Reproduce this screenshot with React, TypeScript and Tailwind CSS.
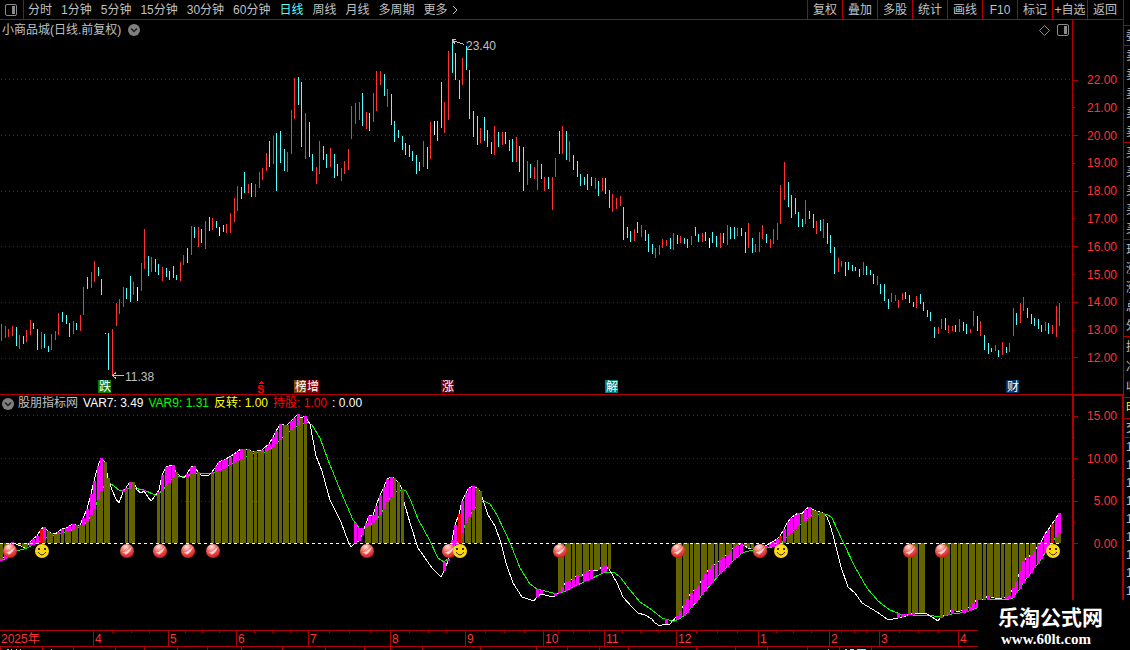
import { Fragment } from 'react'

type Point = [number, number]

const PERIODS = ['分时', '1分钟', '5分钟', '15分钟', '30分钟', '60分钟', '日线', '周线', '月线', '多周期']
const TOOLS = ['复权', '叠加', '多股', '统计', '画线', 'F10', '标记', '+自选', '返回']

// One entry per trading day: direction (r up, c down, w flat), then high and low on the chart grid
const CANDLES = `
r324-341 r326-338 r329-337 r326-336 c327-346 r335-349 c336-344 r330-342 r320-335 c323-329
c329-350 r332-349 c334-348 c346-352 r334-350 r331-340 r313-335 c312-322 c315-324 c323-337
r321-334 c323-330 r315-331 r287-315 c277-289 r272-288 r261-282 c267-276 c279-295 w333-334
c333-370 r329-375 r303-326 r299-314 r287-307 c288-299 c276-302 r282-295 w287-301 r263-291
r229-269 c256-276 r257-272 c259-272 c264-275 r267-281 c268-277 c271-280 c266-278 c275-280
r262-281 r255-265 c248-263 r226-255 c227-238 r227-247 c229-243 r221-249 c217-231 r218-230
c221-228 w227-236 c225-232 r224-233 r213-233 r198-222 r186-211 c187-199 c172-193 r184-193
c183-197 r184-197 r172-188 r168-180 r153-171 c141-167 r136-164 c133-191 c131-163 c149-171
r152-172 r110-154 r78-119 c77-105 c82-147 r113-159 c122-157 c154-171 r167-184 r141-174
c146-160 c154-168 r148-167 c154-178 c164-176 r168-181 r161-174 r149-170 r106-139 r103-124
r102-120 c93-126 r112-129 c113-131 r93-122 r71-111 r71-85 c74-96 r89-107 c94-125
c121-142 c130-138 c136-150 c143-155 c145-157 c151-161 c155-174 c162-171 r141-167 c147-169
r122-159 w121-135 c121-141 c82-128 r102-133 r51-120 c43-73 c53-80 c80-99 r58-85
c46-70 c70-119 c111-137 c116-145 r128-143 c117-141 c130-147 c142-154 r126-155 c132-147
r132-145 c132-144 c140-151 c139-162 r137-162 c146-172 c147-191 r161-185 c164-178 r167-179
r160-190 c164-179 r177-191 c177-189 r177-210 r158-177 c131-154 r126-154 c131-160 r141-162
c155-170 c161-177 c174-186 c177-185 c174-190 c177-186 r178-189 c181-196 r178-191 c178-194
c190-208 r194-212 r198-209 r196-206 c207-240 c227-238 c231-242 r229-241 c222-233 r225-237
c230-241 c234-252 c244-254 r248-258 r245-255 r239-248 r240-246 c238-249 r233-250 c235-244
r236-243 c238-244 c239-248 r236-245 c227-236 c234-242 r233-242 c232-241 w238-248 c232-243
c236-247 r233-248 c233-243 r225-245 c227-239 c227-239 r228-236 c228-236 c232-253 r223-248
c238-253 r244-252 r232-252 r225-239 c234-243 r239-248 r229-244 r223-240 r185-224 r162-200
c182-207 c195-218 c198-214 c212-227 c219-227 r200-224 c211-219 c214-228 r221-234 c220-231
r219-238 c223-244 c235-253 c247-274 r258-272 r261-267 c262-276 c262-270 c265-271 c267-271
c269-277 r262-275 c266-275 c270-275 c274-284 r276-285 c284-294 c284-301 c299-309 r293-302
r295-301 r300-308 r293-300 c292-299 c295-303 c302-307 r296-308 c294-304 c302-311 c310-317
c312-321 c327-338 r327-334 r319-329 c318-330 r325-333 r326-331 c325-332 r319-332 c322-331
c324-334 r329-333 r311-326 c316-331 r321-336 c335-350 c343-354 c348-352 r345-351 c350-357
r342-355 c347-353 r343-352 r308-336 c313-325 r303-323 r297-311 c308-318 c314-324 c318-326
c319-329 c325-332 r322-331 c323-334 r325-334 r306-337 r303-326`
  .trim()
  .split(/\s+/)
  .map((s) => {
    const [top, bottom] = s.slice(1).split('-').map(Number)
    return { kind: s[0], top, bottom }
  })

const CANDLE_COLORS: Record<string, string> = { r: '#ff3232', c: '#54ffff', w: '#ffffff' }

const dayX = (k: number) => Math.floor(1.72 + 3.574 * k)

const ZERO = 543

const FAST: Point[] = [
  [0, 560], [5, 556], [9, 546], [12, 542], [18, 545], [26, 548], [30, 542], [34, 538], [37, 536], [41, 529], [44, 527],
  [48, 531], [51, 533], [55, 534], [58, 532], [62, 529], [66, 528], [73, 524], [76, 525], [80, 525], [83, 518], [87, 509],
  [91, 494], [94, 481], [98, 466], [101, 458], [105, 462], [108, 478], [112, 490], [116, 499], [119, 503], [123, 492],
  [130, 482], [134, 482], [137, 490], [141, 493], [144, 491], [148, 497], [151, 501], [155, 496], [159, 490], [162, 475],
  [166, 467], [173, 465], [176, 472], [180, 476], [184, 478], [187, 474], [191, 467], [194, 466], [198, 472], [201, 475],
  [209, 475], [212, 472], [219, 462], [226, 459], [234, 454], [241, 449], [248, 449], [252, 452], [262, 450], [269, 444],
  [273, 437], [280, 424], [284, 425], [287, 425], [294, 418], [298, 414], [301, 418], [305, 416], [310, 424], [316, 456],
  [322, 471], [330, 500], [341, 522], [348, 541], [351, 547], [355, 543], [359, 541], [362, 535], [366, 523], [369, 516],
  [373, 515], [376, 506], [380, 495], [384, 487], [387, 479], [391, 477], [394, 478], [398, 482], [402, 489], [404, 502],
  [410, 523], [418, 548], [423, 555], [432, 568], [441, 577], [444, 571], [448, 561], [452, 540], [455, 525], [459, 514],
  [462, 501], [466, 493], [469, 488], [473, 486], [477, 488], [480, 491], [484, 503], [488, 515], [495, 526], [501, 543],
  [506, 563], [513, 583], [522, 597], [528, 599], [534, 601], [537, 597], [541, 594], [553, 597], [555, 596], [559, 592],
  [562, 587], [566, 582], [570, 580], [573, 579], [577, 575], [580, 577], [584, 574], [587, 571], [590, 570], [594, 570],
  [598, 570], [602, 567], [605, 566], [609, 569], [617, 583], [623, 597], [633, 608], [638, 613], [645, 615], [652, 619],
  [655, 623], [660, 626], [662, 625], [666, 624], [670, 624], [677, 616], [680, 611], [684, 605], [687, 599], [691, 593],
  [695, 589], [698, 586], [702, 580], [705, 574], [709, 569], [712, 565], [716, 564], [719, 561], [723, 557], [727, 555],
  [730, 551], [734, 547], [737, 545], [741, 544], [745, 546], [748, 548], [752, 549], [763, 548], [767, 545], [770, 543],
  [774, 541], [777, 539], [780, 536], [784, 529], [787, 523], [791, 518], [795, 515], [798, 513], [802, 514], [805, 510],
  [809, 507], [812, 509], [816, 511], [820, 512], [823, 513], [827, 517], [830, 525], [833, 535], [836, 547], [841, 567],
  [848, 587], [855, 593], [862, 603], [877, 612], [887, 619], [893, 619], [898, 618], [902, 617], [906, 616], [909, 614],
  [916, 613], [925, 613], [932, 617], [938, 621], [941, 617], [945, 615], [948, 613], [952, 610], [956, 611], [960, 611],
  [963, 610], [966, 609], [970, 607], [973, 603], [977, 600], [984, 599], [988, 596], [995, 598], [1002, 598], [1009, 596],
  [1013, 588], [1016, 582], [1020, 571], [1023, 561], [1027, 558], [1031, 555], [1034, 551], [1038, 546], [1041, 542],
  [1045, 534], [1048, 530], [1052, 524], [1055, 520], [1059, 513],
]

const SLOW: Point[] = [
  [0, 561], [5, 559], [8, 557], [17, 551], [27, 548], [34, 544], [41, 541], [48, 537], [55, 535], [66, 532], [80, 527],
  [87, 522], [91, 515], [94, 509], [98, 500], [101, 491], [105, 485], [110, 483], [114, 486], [120, 491], [127, 489],
  [133, 488], [144, 490], [155, 495], [158, 494], [162, 491], [166, 486], [173, 478], [178, 476], [187, 477], [191, 474],
  [200, 473], [212, 474], [219, 471], [230, 465], [243, 458], [255, 453], [266, 452], [273, 447], [281, 439], [291, 430],
  [300, 425], [307, 422], [312, 425], [320, 438], [328, 460], [341, 492], [353, 520], [359, 528], [366, 528], [369, 526],
  [373, 523], [376, 520], [380, 515], [384, 509], [387, 502], [391, 497], [398, 490], [406, 491], [411, 501], [418, 519],
  [430, 541], [438, 558], [444, 562], [448, 559], [455, 545], [459, 540], [462, 533], [466, 523], [469, 517], [473, 510],
  [480, 503], [484, 501], [490, 504], [497, 515], [505, 532], [511, 545], [520, 568], [530, 584], [537, 589], [553, 593],
  [559, 593], [566, 591], [573, 587], [584, 582], [605, 572], [615, 573], [620, 577], [630, 590], [640, 602], [652, 610],
  [662, 618], [672, 621], [677, 620], [684, 616], [691, 608], [698, 600], [705, 591], [712, 583], [719, 575], [727, 567],
  [734, 560], [741, 554], [745, 552], [753, 550], [767, 548], [777, 546], [784, 541], [787, 537], [791, 533], [795, 529],
  [798, 526], [805, 521], [812, 515], [818, 514], [827, 514], [832, 518], [843, 542], [855, 567], [867, 588], [878, 601],
  [890, 610], [900, 614], [913, 615], [927, 615], [940, 617], [952, 614], [960, 613], [966, 612], [977, 608], [990, 600],
  [1009, 599], [1013, 598], [1016, 593], [1020, 589], [1023, 583], [1027, 578], [1031, 573], [1034, 568], [1038, 564],
  [1041, 559], [1045, 553], [1048, 548], [1052, 543], [1055, 538], [1059, 533],
]

// Stretches where the position is held and the olive columns are filled in
const HOLD: Point[] = [
  [0, 9], [18, 27], [44, 109], [125, 135], [158, 178], [187, 199], [212, 306], [366, 403], [462, 481], [559, 610],
  [677, 753], [784, 825], [909, 924], [941, 1041], [1054, 1060],
]

const REVERSALS = [41, 459, 780, 1052]
const BALLS = [10, 127, 160, 188, 213, 367, 449, 560, 678, 760, 910, 942]
const SMILES = [42, 460, 781, 1053]

const valueAt = (line: Point[], x: number) => {
  const i = line.findIndex((p) => p[0] >= x)
  if (i <= 0) return line[i === 0 ? 0 : line.length - 1][1]
  const [x0, y0] = line[i - 1]
  const [x1, y1] = line[i]
  return Math.round(y0 + ((y1 - y0) * (x - x0)) / (x1 - x0))
}

const BARS = CANDLES.map((_, k) => {
  const x = dayX(k)
  const fast = valueAt(FAST, x)
  const slow = valueAt(SLOW, x)
  const rising = k === 0 || fast < valueAt(FAST, dayX(k - 1))
  const nearZero = Math.abs(fast - ZERO) < Math.abs(slow - ZERO) ? fast : slow
  return {
    x,
    fast,
    slow,
    rising,
    reversal: REVERSALS.some((r) => Math.abs(r - x) < 2),
    held: HOLD.some(([a, b]) => x >= a && x <= b),
    end: rising ? nearZero : fast,
  }
})

const EVENTS = [
  { x: 98, text: '跌', color: '#008000' },
  { x: 294, text: '榜', color: '#804000' },
  { x: 306, text: '增', color: '#800000' },
  { x: 441, text: '涨', color: '#600000' },
  { x: 605, text: '解', color: '#008080' },
  { x: 1006, text: '财', color: '#003468' },
]

const MONTHS = [
  { label: '2025年', width: 93 },
  { label: '4', width: 75 },
  { label: '5', width: 68 },
  { label: '6', width: 72 },
  { label: '7', width: 82 },
  { label: '8', width: 75 },
  { label: '9', width: 78 },
  { label: '10', width: 61 },
  { label: '11', width: 72 },
  { label: '12', width: 82 },
  { label: '1', width: 71 },
  { label: '2', width: 50 },
  { label: '3', width: 79 },
  { label: '4', width: 165 },
]
const AXIS_WIDTH = MONTHS.reduce((sum, m) => sum + m.width, 0)

const PRICES = [22, 21, 20, 19, 18, 17, 16, 15, 14, 13, 12]
const LEVELS = ['15.00', '', '10.00', '', '5.00', '', '0.00']

function PanelIcon() {
  return (
    <svg width="12" height="12" viewBox="0 0 12 12" className="block" aria-hidden="true">
      <rect x="0.5" y="0.5" width="11" height="11" rx="1.5" fill="none" stroke="#8a8a8a" />
      <rect x="7" y="2" width="3" height="8" fill="#8a8a8a" />
    </svg>
  )
}

function FoldIcon() {
  return (
    <svg width="12" height="12" viewBox="0 0 12 12" className="block" aria-hidden="true">
      <circle cx="6" cy="6" r="6" fill="#808080" />
      <path d="M3 4.5 L6 7.5 L9 4.5" fill="none" stroke="#1c1c1c" strokeWidth="1.5" />
    </svg>
  )
}

function Ball({ x }: { x: number }) {
  return (
    <g transform={`translate(${x} 551)`}>
      <circle r="7" fill="url(#ball)" />
      <path d="M-5 2 Q0 1 5 -4 Q3 2 -2 4 Q0 2 -5 2 Z" fill="#fff" opacity="0.75" />
    </g>
  )
}

function Smile({ x }: { x: number }) {
  return (
    <g transform={`translate(${x} 551)`}>
      <circle r="7" fill="#fcd816" />
      <rect x="-4" y="-3" width="2" height="2" fill="#3c3000" />
      <rect x="2" y="-3" width="2" height="2" fill="#3c3000" />
      <path d="M-4 1 Q0 7 4 1" fill="none" stroke="#3c3000" />
    </g>
  )
}

function PriceChart() {
  return (
    <svg viewBox="0 20 1072 374" className="block h-auto w-full" shapeRendering="crispEdges" role="img" aria-label="日线">
      {[79, 135, 191, 246, 302, 358].map((y) => (
        <path key={y} d={`M1 ${y}.5 H1072`} stroke="#a80000" strokeDasharray="1 3" />
      ))}
      {CANDLES.map((c, k) => (
        <rect key={k} x={dayX(k)} y={c.top} width="1" height={c.bottom - c.top} fill={CANDLE_COLORS[c.kind]} />
      ))}
      <g fill="none" stroke="#c0c0c0">
        <path d="M452.5 43 V39.5 H456 M453 40.5 L464 44.5 M453 41 L455 44" />
        <path d="M112 375.5 H124 M116 372.5 L112.5 375.5 L116 378.5" />
      </g>
      <g fontSize="12" fill="#c0c0c0">
        <text x="466" y="50">23.40</text>
        <text x="125" y="381">11.38</text>
      </g>
      <path d="M258 384 L261 381 L264 384 Z" fill="#f00" />
      <text x="257" y="393" fontSize="11" fontWeight="bold" fill="#f00">
        S
      </text>
      {EVENTS.map((e) => (
        <Fragment key={e.x}>
          <rect x={e.x} y="380" width="13" height="13" fill={e.color} />
          <text x={e.x + 1} y="391" fontSize="12" fill="#fff">
            {e.text}
          </text>
        </Fragment>
      ))}
    </svg>
  )
}

function IndicatorChart() {
  return (
    <svg viewBox="0 395 1072 235" className="block h-auto w-full" role="img" aria-label="股朋指标网">
      <defs>
        <radialGradient id="ball" cx="0.4" cy="0.2" r="0.8">
          <stop offset="0" stopColor="#ffe4e0" />
          <stop offset="0.5" stopColor="#f06058" />
          <stop offset="1" stopColor="#d01818" />
        </radialGradient>
      </defs>
      <g shapeRendering="crispEdges">
        {[415, 458, 501].map((y) => (
          <path key={y} d={`M1 ${y}.5 H1072`} stroke="#a80000" strokeDasharray="1 3" />
        ))}
        <polyline points={SLOW.map((p) => p.join()).join(' ')} fill="none" stroke="#00ff00" />
        <polyline points={FAST.map((p) => p.join()).join(' ')} fill="none" stroke="#ffffff" />
        {BARS.map((b) => (
          <g key={b.x}>
            {b.held && (
              <rect x={b.x - 1} y={Math.min(ZERO, b.end)} width="3" height={Math.abs(ZERO - b.end)} fill="#656500" />
            )}
            {b.rising && !b.reversal && (
              <rect
                x={b.x - 1}
                y={Math.min(b.fast, b.slow)}
                width="3"
                height={Math.max(1, Math.abs(b.slow - b.fast))}
                fill="#ff00ff"
              />
            )}
            {b.reversal && <rect x={b.x - 1} y={b.fast} width="3" height={ZERO - b.fast} fill="#ff0000" />}
          </g>
        ))}
        <path d={`M0 ${ZERO}.5 H1060`} stroke="#fff" strokeDasharray="3 3" />
      </g>
      {BALLS.map((x) => (
        <Ball key={x} x={x} />
      ))}
      {SMILES.map((x) => (
        <Smile key={x} x={x} />
      ))}
    </svg>
  )
}

// Quote panel, collapsed to a sliver at the window edge
const QUOTE_GROUPS = [
  { rows: '委', box: 'h-[20px]' },
  { rows: '卖卖卖卖卖', box: 'h-[97px]' },
  { rows: '买买买买买', box: 'h-[97px]' },
  { rows: '现涨涨总外', box: 'h-[97px]' },
  { rows: '换净收', box: 'h-[61px]' },
  { rows: '明', box: 'h-[21px] text-[#ffff00]' },
  { rows: '交', box: 'h-[19px]' },
  { rows: '111111111', box: 'h-[163px]' },
]

function QuoteSliver() {
  return (
    <aside className="w-[7px] shrink-0 overflow-hidden border-l border-[#b00000] pt-[25px] text-[#c0c0c0]">
      {QUOTE_GROUPS.map((g) => (
        <div key={g.rows} className={`flex flex-col justify-around border-t border-[#b00000] pl-[2px] leading-[18px] ${g.box}`}>
          {g.rows.split('').map((s, i) => (
            <span key={i}>{s}</span>
          ))}
        </div>
      ))}
    </aside>
  )
}

export default function App() {
  return (
    <div className="relative flex min-h-screen overflow-hidden bg-black font-['Liberation_Sans','Noto_Sans_CJK_SC',sans-serif] text-[12px]">
      <main className="min-w-0 flex-1">
        <header className="flex h-5 justify-between border-b border-[#b00000] text-[#c0c0c0]">
          <nav className="flex items-center whitespace-nowrap">
            <button className="mr-1 flex h-full w-6 items-center border-r border-[#b00000] pl-[5px]" aria-label="侧栏">
              <PanelIcon />
            </button>
            <div className="flex gap-[9px]">
              {PERIODS.map((p) => (
                <button key={p} className={p === '日线' ? 'text-[#54ffff]' : ''}>
                  {p}
                </button>
              ))}
              <button className="flex items-center gap-1">
                更多
                <svg width="6" height="10" viewBox="0 0 6 10" aria-hidden="true">
                  <path d="M1 1 L5 5 L1 9" fill="none" stroke="#c0c0c0" />
                </svg>
              </button>
            </div>
          </nav>
          <div className="mr-px flex">
            {TOOLS.map((tool) => (
              <button key={tool} className="w-[35px] border-l border-[#b00000] text-center whitespace-nowrap">
                {tool}
              </button>
            ))}
          </div>
        </header>

        <section className="flex border-b border-[#b00000]">
          <div className="relative min-w-0 flex-1">
            <PriceChart />
            <div className="absolute top-0 left-0 flex w-full items-center justify-between pr-[3px] pl-[2px] leading-[20px] text-[#c0c0c0]">
              <h1 className="flex items-center gap-[7px]">
                小商品城(日线.前复权)
                <FoldIcon />
              </h1>
              <div className="flex items-center gap-[7px]">
                <svg width="11" height="11" viewBox="0 0 11 11" aria-hidden="true">
                  <path d="M5.5 0.5 L10.5 5.5 L5.5 10.5 L0.5 5.5 Z" fill="none" stroke="#8a8a8a" />
                </svg>
                <PanelIcon />
              </div>
            </div>
          </div>
          <div className="flex w-[51px] flex-col justify-between border-l border-[#b00000] pt-[52px] pb-[28px] text-[#ff3232]">
            {PRICES.map((p) => (
              <div key={p} className="flex h-4 items-center justify-between pr-[6px]">
                <span className={p % 2 ? 'h-px w-[2px] bg-[#b00000]' : 'h-px w-[5px] bg-[#b00000]'} />
                {p}.00
              </div>
            ))}
          </div>
        </section>

        <section className="flex border-b border-[#b00000]">
          <div className="relative min-w-0 flex-1">
            <IndicatorChart />
            <div className="absolute top-0 left-0 flex items-center gap-[5px] pl-[2px] leading-[17px] whitespace-nowrap">
              <h2 className="flex items-center gap-1 text-[#c0c0c0]">
                <FoldIcon />
                股朋指标网
              </h2>
              <span className="text-white">VAR7: 3.49</span>
              <span className="text-[#00ff00]">VAR9: 1.31</span>
              <span className="text-[#ffff00]">反转: 1.00</span>
              <span className="text-[#ff0000]">持股: 1.00</span>
              <span className="text-white">: 0.00</span>
            </div>
          </div>
          <div className="flex w-[51px] flex-col justify-between border-t border-r border-l-2 border-[#b00000] pt-[12px] pb-[78px] text-[#ff3232]">
            {LEVELS.map((l, i) => (
              <div key={i} className="flex h-4 items-center justify-between pr-[5px]">
                <span className={l ? 'h-px w-1 bg-[#b00000]' : 'h-px w-px bg-[#b00000]'} />
                {l}
              </div>
            ))}
          </div>
        </section>

        <footer>
          <div className="flex h-4 border-b border-[#b00000] text-[#ff3232]">
            {MONTHS.map((m, i) => (
              <div
                key={i}
                className={i ? 'min-w-0 border-l border-[#b00000]' : 'min-w-0 whitespace-nowrap'}
                style={{ width: `${(m.width / AXIS_WIDTH) * 100}%` }}
              >
                <div className="flex h-[2px] justify-evenly">
                  {i > 0 && [1, 2, 3].map((t) => <span key={t} className="w-px bg-[#b00000]" />)}
                </div>
                <div className="pl-px leading-[12px]">{m.label}</div>
              </div>
            ))}
          </div>
          <div className="h-[3px]">
            <svg viewBox="0 647 1123 3" className="block h-auto w-full" shapeRendering="crispEdges" aria-hidden="true">
              {[0, 42, 73, 115, 144, 177, 207, 241, 282, 325, 364, 390, 422, 480, 536, 567, 599, 628, 696, 735, 767, 807, 839, 871].map(
                (x) => (
                  <rect key={x} x={x} y="647" width="1" height="3" fill="#b00000" />
                ),
              )}
              <path d="M845 649.5 H847 M850 649.5 H854 M857 649.5 H866" stroke="#54ffff" />
              <path d="M7 649.5 H9 M11 649.5 H12 M16 649.5 H17 M20 649.5 H21 M51 649.5 H52 M828 649.5 H829" stroke="#c0c0c0" />
            </svg>
          </div>
        </footer>
      </main>

      <QuoteSliver />

      <div className="absolute right-0 bottom-0 h-[50px] w-[152px] bg-black pt-1 pl-5 text-white">
        <div className="text-[21px] leading-[28px] font-bold">乐淘公式网</div>
        <div className="pl-[3px] font-['Liberation_Serif',serif] text-[15px] leading-[14px] font-bold">www.60lt.com</div>
      </div>
    </div>
  )
}
